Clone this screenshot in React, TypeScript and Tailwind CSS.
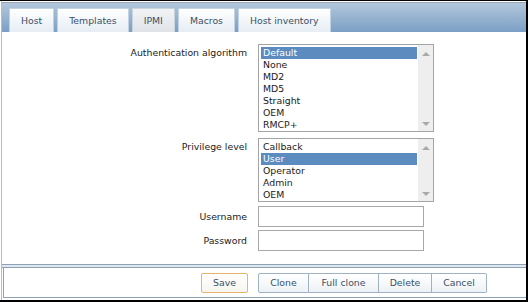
const tabs = ["Host", "Templates", "IPMI", "Macros", "Host inventory"];

const authOptions = ["Default", "None", "MD2", "MD5", "Straight", "OEM", "RMCP+"];
const privOptions = ["Callback", "User", "Operator", "Admin", "OEM"];

function ListBox({ options, selected }: { options: string[]; selected: string }) {
  return (
    <div className="w-[176px] flex border border-[#a4a4a4] bg-white">
      <div className="w-[159px] pt-[2px] pl-[2px] pr-[1px]">
        {options.map((o) => (
          <div
            key={o}
            className={
              o === selected
                ? "h-[12px] leading-[12px] pl-[2px] bg-[#5b8bbf] text-white"
                : "h-[12px] leading-[12px] pl-[2px] text-[#1a1a1a]"
            }
          >
            {o}
          </div>
        ))}
      </div>
      <div className="w-[15px] bg-[#eeeeee] flex flex-col items-center justify-between pt-[7px] pb-[5px]">
        <div className="w-0 h-0 border-x-[4px] border-x-transparent border-b-[4px] border-b-[#a9a9a9]" />
        <div className="w-0 h-0 border-x-[4px] border-x-transparent border-t-[4px] border-t-[#a9a9a9]" />
      </div>
    </div>
  );
}

function Label({ children, top }: { children: string; top?: boolean }) {
  return (
    <div
      className={
        top
          ? "text-right text-[#1a1a1a] pt-[3px] leading-[12px]"
          : "text-right text-[#1a1a1a] self-center leading-[12px]"
      }
    >
      {children}
    </div>
  );
}

export default function App() {
  return (
    <div className="w-[528px] h-[302px] bg-white border-t border-r-2 border-b-2 border-black font-['DejaVu_Sans',sans-serif] text-[9.33px] flex flex-col">
      <div className="flex-1 ml-[1px] border-l border-[#b4bcc4] flex flex-col">
        {/* tab bar */}
        <div className="mt-[1px] h-[30px] bg-gradient-to-b from-[#b3c7db] to-[#7b9fc5] border-t border-[#9aa8b6] flex items-end pl-[7px] gap-[3px]">
          {tabs.map((t) => (
            <div
              key={t}
              className={
                t === "IPMI"
                  ? "h-[24px] px-[11px] flex items-center border border-b-0 border-[#c9d3dd] bg-gradient-to-b from-[#f2f3f5] to-[#dfe3e8] text-[#3a5068]"
                  : "h-[24px] px-[11px] flex items-center border border-b-0 border-[#c3d2e1] bg-gradient-to-b from-[#ffffff] to-[#e6edf4] text-[#3a5068]"
              }
            >
              {t}
            </div>
          ))}
        </div>

        {/* form */}
        <div className="h-[232px] pt-[12px] grid grid-cols-[245px_auto] gap-x-[11px] content-start">
          <Label top>Authentication algorithm</Label>
          <ListBox options={authOptions} selected="Default" />

          <div className="col-span-2 h-[6px]" />
          <Label top>Privilege level</Label>
          <ListBox options={privOptions} selected="User" />

          <div className="col-span-2 h-[4px]" />
          <Label>Username</Label>
          <div className="w-[166px] h-[21px] border border-[#a8a8a8] bg-white" />

          <div className="col-span-2 h-[3px]" />
          <Label>Password</Label>
          <div className="w-[166px] h-[21px] border border-[#a8a8a8] bg-white" />
        </div>

        {/* separator */}
        <div className="h-[4px] border-y border-[#8ea2b6] bg-[#dfe8f1]" />

        {/* footer */}
        <div className="h-[30px] ml-[1px] border-l border-b border-[#8ea2b6] flex items-center pl-[197px]">
          <button className="h-[20px] w-[47px] border border-[#e6b46a] rounded-[2px] bg-gradient-to-b from-white to-[#f7f5ef] text-[#3a5068]">
            Save
          </button>
          <div className="ml-[10px] flex">
            <button className="h-[20px] w-[51px] border border-[#9fb2c5] rounded-l-[2px] bg-gradient-to-b from-white to-[#eef2f6] text-[#3a5068]">
              Clone
            </button>
            <button className="h-[20px] w-[70px] border border-l-0 border-[#9fb2c5] bg-gradient-to-b from-white to-[#eef2f6] text-[#3a5068]">
              Full clone
            </button>
            <button className="h-[20px] w-[53px] border border-l-0 border-[#9fb2c5] bg-gradient-to-b from-white to-[#eef2f6] text-[#3a5068]">
              Delete
            </button>
            <button className="h-[20px] w-[55px] border border-l-0 border-[#9fb2c5] rounded-r-[2px] bg-gradient-to-b from-white to-[#eef2f6] text-[#3a5068]">
              Cancel
            </button>
          </div>
        </div>
        <div className="h-[2px]" />
      </div>
    </div>
  );
}
